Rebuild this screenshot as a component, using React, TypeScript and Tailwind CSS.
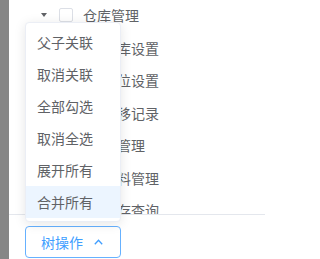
import React from "react";

const font = { fontFamily: '"Noto Sans CJK SC", "Noto Sans", sans-serif' };

const children = ["仓库设置", "库位设置", "转移记录", "库管理", "物料管理", "库存查询"];
const menu = ["父子关联", "取消关联", "全部勾选", "取消全选", "展开所有", "合并所有"];

export default function App() {
  return (
    <div className="flex w-[265px] h-[259px] overflow-hidden bg-white text-[14px] text-[#606266]" style={font}>
      <div className="w-[9px] shrink-0 bg-[#868686]" />
      <div className="relative flex flex-1 flex-col">
        <div className="h-[214px] shrink-0 overflow-hidden">
          <div className="-mt-[1px]">
            <div className="flex h-[32.5px] items-center pl-[32px]">
              <span className="ml-[0px] h-0 w-0 border-x-[3.5px] border-t-[4px] border-x-transparent border-t-[#606266]" />
              <span className="ml-[12px] h-[14px] w-[14px] rounded-[2px] border border-[#dcdfe6] bg-white" />
              <span className="ml-[10px] leading-none">仓库管理</span>
            </div>
            {children.map((c) => (
              <div key={c} className="flex h-[32.5px] items-center pl-[94px]">
                <span className="leading-none">{c}</span>
              </div>
            ))}
          </div>
        </div>
        <div className="flex-1 border-t border-[#e4e7ed] pl-[16px] pt-[11px]">
          <button className="flex h-[32px] w-[96px] items-center rounded-[4px] border border-[#66b1ff] bg-white pl-[15px] text-[14px] text-[#409eff]">
            <span className="leading-none">树操作</span>
            <svg className="ml-[11px]" width="9" height="6" viewBox="0 0 9 6" fill="none">
              <path d="M0.8 5.2 L4.5 1.2 L8.2 5.2" stroke="#409eff" strokeWidth="1.3" />
            </svg>
          </button>
        </div>
        <div className="absolute left-[16px] top-[22px] w-[96px] rounded-[4px] border border-[#ebeef5] bg-white py-[3px] shadow-[0_2px_12px_0_rgba(0,0,0,0.1)]">
          {menu.map((m, i) => (
            <div
              key={m}
              className={
                i === 5
                  ? "flex h-[32px] items-center bg-[#ecf5ff] pl-[11px] text-[#606266]"
                  : "flex h-[32px] items-center pl-[11px] text-[#606266]"
              }
            >
              <span className="leading-none">{m}</span>
            </div>
          ))}
        </div>
      </div>
    </div>
  );
}
